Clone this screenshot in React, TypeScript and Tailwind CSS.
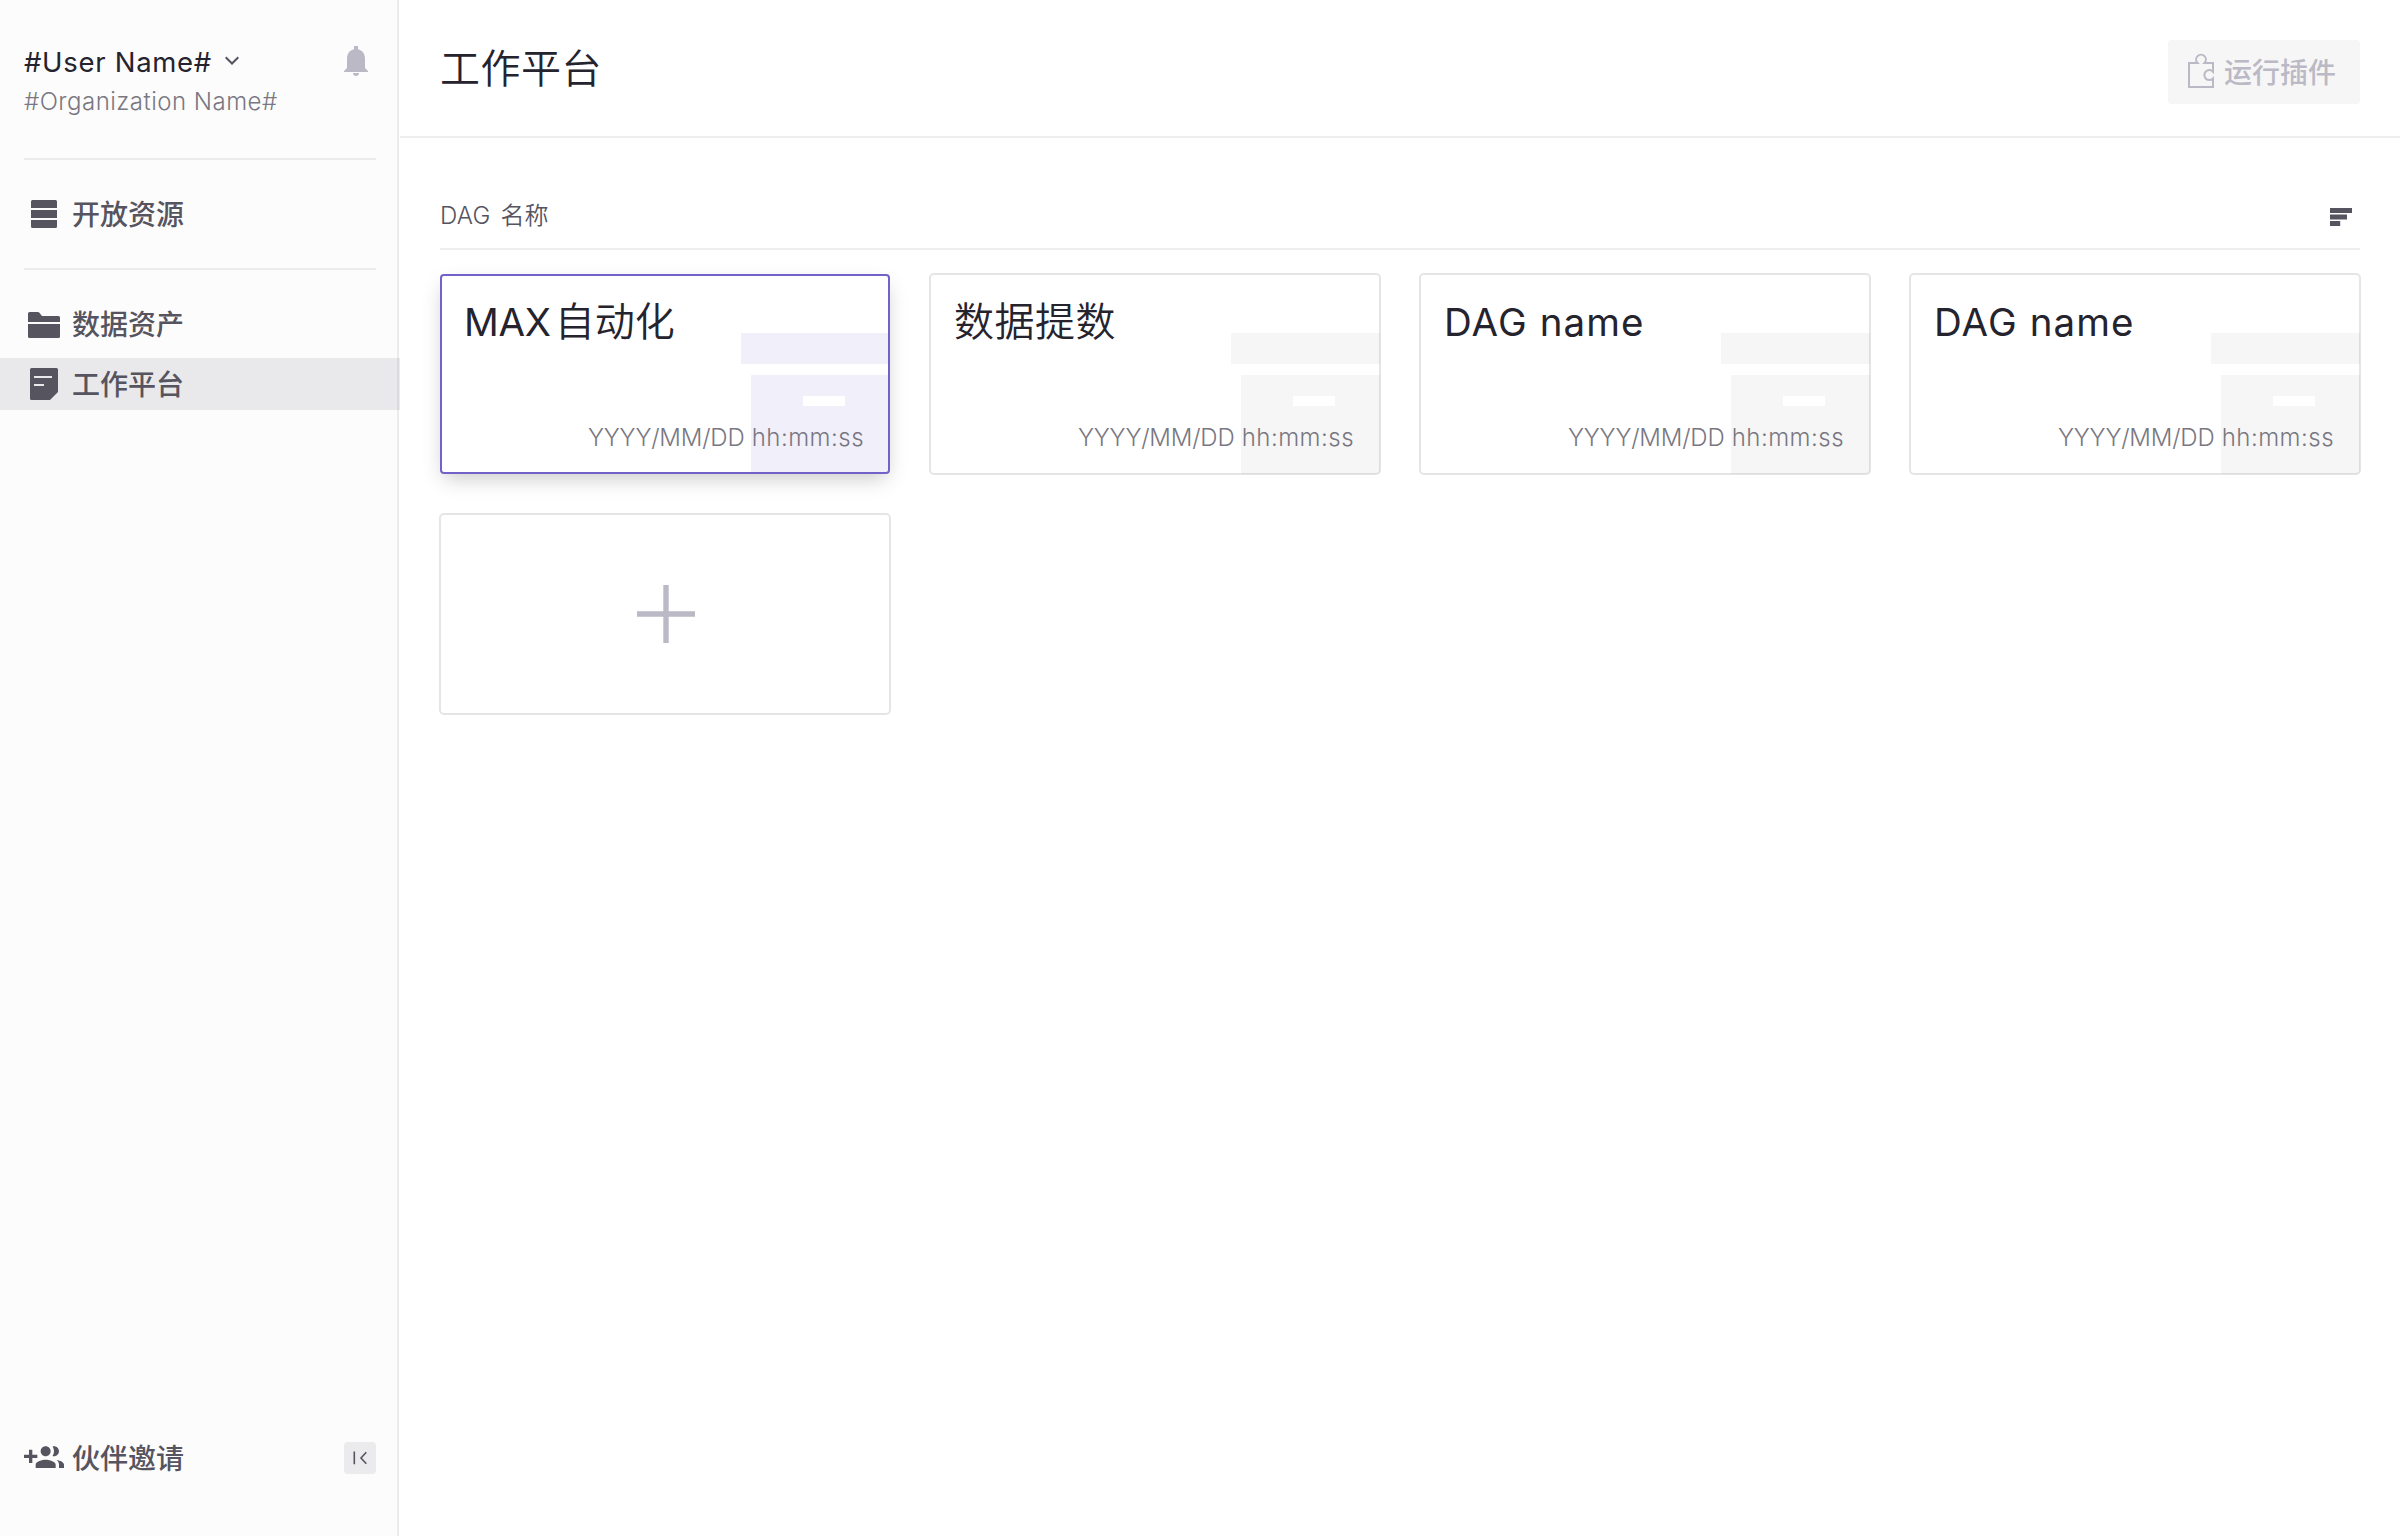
import type { ReactNode } from 'react';

function BellIcon() {
  return (
    <svg width="24" height="30" viewBox="0 0 24 30" fill="#bbb9c5">
      <path d="M10 0h4v3.200c4.300.9 7 4.500 7 9.300V22l3 3v1H0v-1l3-3v-9.500C3 7.700 5.700 4.100 10 3.200z" />
      <path d="M9 27h6c0 1.700-1.300 3-3 3s-3-1.300-3-3z" />
    </svg>
  );
}

function ChevronDownIcon() {
  return (
    <svg width="14" height="10" viewBox="0 0 14 10" fill="none" stroke="#56545f" strokeWidth="2">
      <path d="M0.700 1.200 7 7.500l6.300-6.300" />
    </svg>
  );
}

function StackIcon() {
  return (
    <svg width="40" height="40" viewBox="0 0 40 40" fill="#56545f">
      <path d="M7 8V7.500A1.500 1.500 0 0 1 8.500 6h23A1.500 1.500 0 0 1 33 7.500V14H7zM7 16h26v8H7zM7 26h26v6.500a1.500 1.500 0 0 1-1.500 1.500h-23A1.500 1.500 0 0 1 7 32.500z" />
    </svg>
  );
}

function FolderIcon() {
  return (
    <svg width="40" height="40" viewBox="0 0 40 40" fill="#56545f">
      <path d="M4 18v-8.500A1.500 1.500 0 0 1 5.500 8h8.300a2 2 0 0 1 1.400.6L18 12h16.500a1.500 1.500 0 0 1 1.500 1.500V18zM4 20h32v12.500a1.500 1.500 0 0 1-1.500 1.500h-29A1.500 1.500 0 0 1 4 32.500z" />
    </svg>
  );
}

function NoteIcon() {
  return (
    <svg width="40" height="40" viewBox="0 0 40 40" fill="#56545f">
      <path
        fillRule="evenodd"
        d="M7.500 4h25A1.500 1.500 0 0 1 34 5.500V28l-8 8H7.500A1.500 1.500 0 0 1 6 34.500v-29A1.500 1.500 0 0 1 7.500 4zM10 12v2h18v-2zM10 20v2h10v-2z"
      />
    </svg>
  );
}

function GroupAddIcon() {
  return (
    <svg width="40" height="40" viewBox="0 0 24 24" fill="#56545f">
      <path d="M8 10H5V7H3v3H0v2h3v3h2v-3h3v-2zm10 1c1.660 0 2.990-1.340 2.990-3S19.660 5 18 5c-.32 0-.63.05-.91.14.57.81.9 1.790.9 2.860s-.34 2.040-.9 2.860c.28.09.59.14.91.14zm-5 0c1.660 0 2.990-1.340 2.990-3S14.660 5 13 5s-3 1.340-3 3 1.340 3 3 3zm6.620 2.160c.83.73 1.380 1.660 1.380 2.840v2h3v-2c0-1.540-2.370-2.490-4.380-2.840zM13 13c-2 0-6 1-6 3v2h12v-2c0-2-4-3-6-3z" />
    </svg>
  );
}

function CollapseIcon() {
  return (
    <svg width="32" height="32" viewBox="0 0 32 32" fill="none" stroke="#56545f" strokeWidth="1.600">
      <path d="M10.300 9.500v12.800M22.300 10.300 17 16l5.300 5.700" />
    </svg>
  );
}

function PuzzleIcon() {
  return (
    <svg width="40" height="40" viewBox="0 0 40 40" fill="none" stroke="#bbb9c5" strokeWidth="2">
      <path d="M9 11h8.500a4.900 4.900 0 1 1 7 0H33v8.700a5 5 0 1 0 0 6.800V35H9z" />
    </svg>
  );
}

function SortIcon() {
  return (
    <svg width="22" height="18" viewBox="0 0 22 18" fill="#56545f">
      <path d="M0 0h22v5H0zM0 6.500h17v5H0zM0 13h10.200v5H0z" />
    </svg>
  );
}

function PlusIcon() {
  return (
    <svg className="ml-[2px]" width="58" height="58" viewBox="0 0 58 58" fill="none" stroke="#bbb9c5" strokeWidth="5.400">
      <path d="M29 0v58M0 29h58" />
    </svg>
  );
}

function NavItem({ icon, label, active = false }: { icon: ReactNode; label: string; active?: boolean }) {
  return (
    <div className={`relative flex h-[52px] w-[400px] items-center gap-2 pl-6 ${active ? 'bg-[#494666]/10' : ''}`}>
      {icon}
      <span className="pt-[2px] text-[28px] leading-[50px] font-medium text-[#56545f]">{label}</span>
    </div>
  );
}

function Sidebar() {
  return (
    <aside className="flex h-full w-[399px] shrink-0 flex-col border-r-2 border-[#ebebec] bg-[#fcfcfc]">
      <div className="mx-6 flex h-[160px] w-[352px] justify-between border-b-2 border-[#ebebec] pt-[42px]">
        <div>
          <div className="flex h-10 items-center gap-[13px]">
            <span className="text-[27.5px] leading-10 tracking-[0.7px] text-[#25232d]">#User Name#</span>
            <div className="pb-[3px]">
              <ChevronDownIcon />
            </div>
          </div>
          <div className="text-[24px] leading-10 font-light tracking-[0.48px] text-[#797781]">#Organization Name#</div>
        </div>
        <div className="mr-2 pt-1">
          <BellIcon />
        </div>
      </div>
      <nav className="flex flex-col">
        <div className="h-[110px] pt-7">
          <NavItem icon={<StackIcon />} label="开放资源" />
          <div className="mx-6 mt-7 h-[2px] w-[352px] bg-[#ebebec]" />
        </div>
        <div className="flex flex-col gap-2 pt-7">
          <NavItem icon={<FolderIcon />} label="数据资产" />
          <NavItem icon={<NoteIcon />} label="工作平台" active />
        </div>
      </nav>
      <div className="mt-auto mb-[52px] flex h-[52px] items-center">
        <NavItem icon={<GroupAddIcon />} label="伙伴邀请" />
        <button className="-ml-14 h-8 w-8 shrink-0 rounded bg-[#ebebed]">
          <CollapseIcon />
        </button>
      </div>
    </aside>
  );
}

function DagCard({ title, selected = false }: { title: ReactNode; selected?: boolean }) {
  const tint = selected ? 'bg-[#f1effa]' : 'bg-[#f6f6f6]';
  return (
    <div className={`relative h-[200px] rounded ${selected ? 'shadow-[0_8px_20px_-4px_rgba(0,0,0,0.22)]' : ''}`}>
      <div className="relative flex h-full flex-col justify-between overflow-hidden rounded bg-white pt-[18px] pr-[26px] pb-[16px] pl-6">
        <div className={`absolute top-[59px] right-0 h-[31px] w-[149px] ${tint}`} />
        <div className={`absolute top-[101px] right-0 h-[99px] w-[139px] ${tint}`}>
          <div className="mt-[21px] ml-[52px] h-[10px] w-[42px] bg-white" />
        </div>
        <div className="relative text-[40px] leading-[60px] text-[#25232d]">{title}</div>
        <div className="relative text-right text-[24px] leading-10 font-light tracking-[0.48px] text-[#797781]">
          <span className="tracking-[-0.2px]">YYYY/MM/DD</span> hh:mm:ss
        </div>
      </div>
      <div
        className={`pointer-events-none absolute border-2 ${
          selected ? 'inset-0 rounded border-[#7262c8]' : '-inset-px rounded-[5px] border-black/10'
        }`}
      />
    </div>
  );
}

const dagName = <span className="text-[38.5px] tracking-[1.1px]">DAG name</span>;

export default function App() {
  return (
    <div className="flex h-[1536px] w-[2400px] overflow-hidden bg-white font-['Inter','Noto_Sans_CJK_SC',sans-serif]">
      <Sidebar />
      <main className="ml-px flex-1">
        <header className="flex h-[138px] justify-between border-b-2 border-[#eeeeee] pr-10 pl-10">
          <h1 className="mt-[39px] text-[40px] leading-[60px] font-[350] tracking-[0.5px] text-[#25232d]">工作平台</h1>
          <button className="mt-10 flex h-16 w-[192px] items-center gap-1 rounded bg-[#f6f6f6] pl-3">
            <PuzzleIcon />
            <span className="pt-[2px] text-[28px] leading-[50px] font-medium text-[#bbb9c5]">运行插件</span>
          </button>
        </header>
        <section className="px-10 pt-[50px]">
          <div className="flex h-[62px] items-start justify-between border-b-2 border-[#eeeeee]">
            <span className="mt-[8px] text-[24px] leading-10 font-[350] tracking-[0.2px] text-[#56545f] [word-spacing:3px]">
              DAG 名称
            </span>
            <div className="mt-5 mr-2">
              <SortIcon />
            </div>
          </div>
          <div className="mt-6 grid grid-cols-4 gap-10">
            <DagCard
              selected
              title={
                <>
                  <span className="mr-[4px] text-[38.5px] tracking-[-0.3px]">MAX</span>
                  <span className="font-[350]">自动化</span>
                </>
              }
            />
            <DagCard title={<span className="font-[350] tracking-[0.5px]">数据提数</span>} />
            <DagCard title={dagName} />
            <DagCard title={dagName} />
            <button className="relative flex h-[200px] items-center justify-center rounded bg-white">
              <PlusIcon />
              <span className="pointer-events-none absolute -inset-px rounded-[5px] border-2 border-black/10" />
            </button>
          </div>
        </section>
      </main>
    </div>
  );
}
